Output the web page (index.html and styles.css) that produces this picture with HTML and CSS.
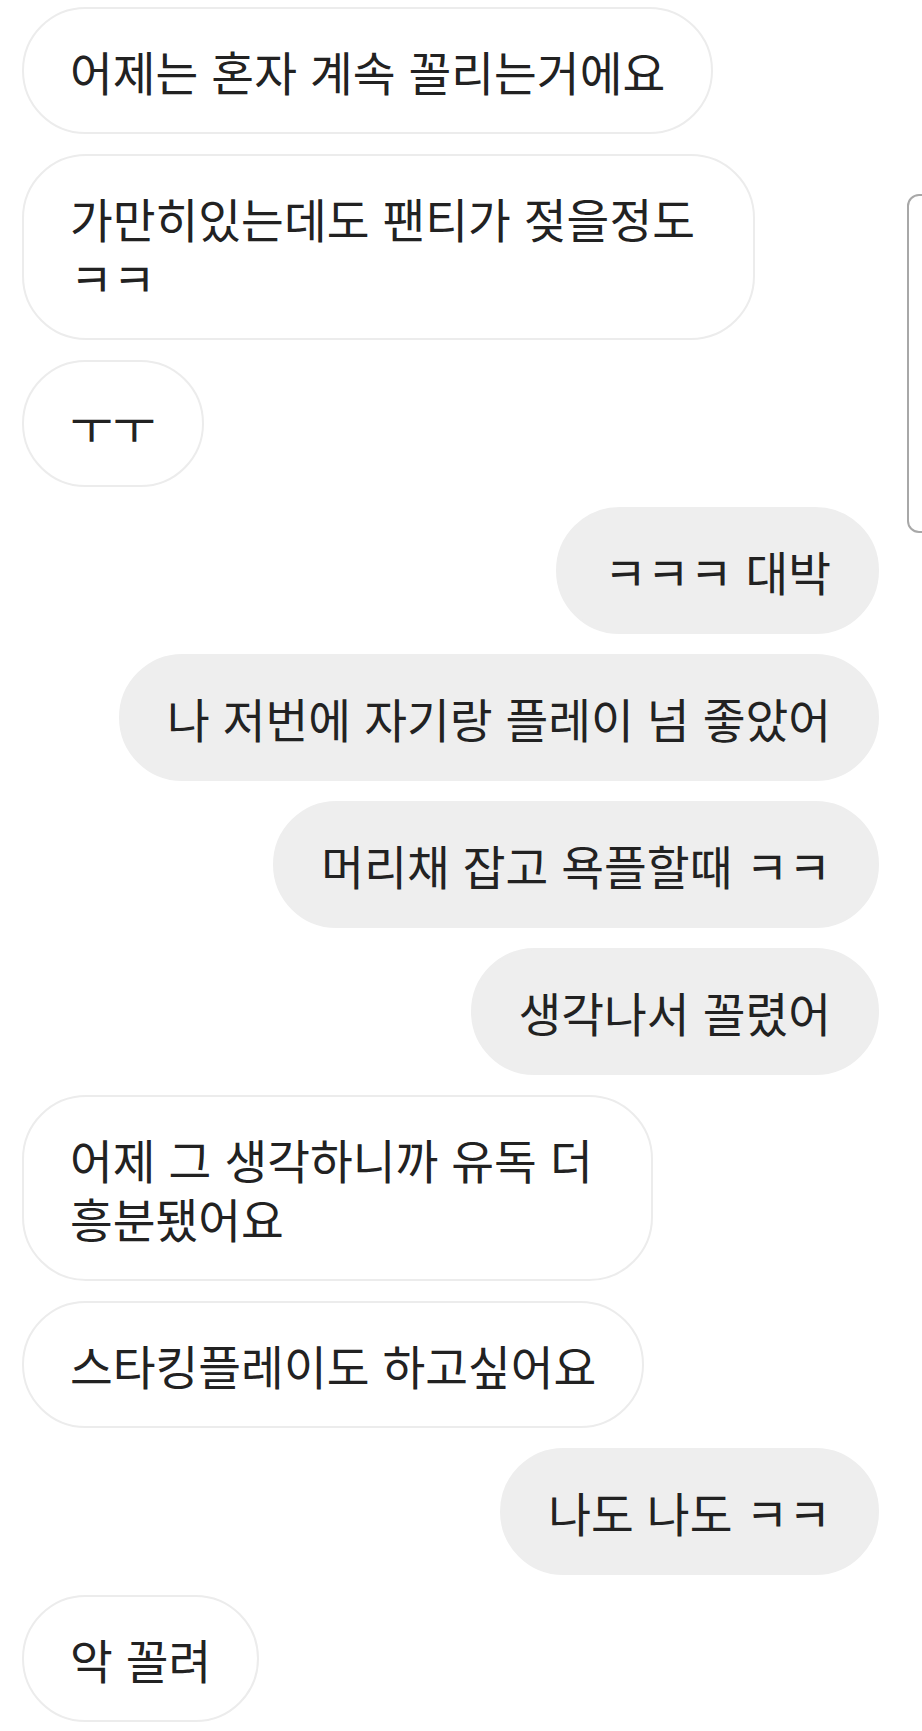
FILE: index.html
```html
<!DOCTYPE html>
<html lang="ko">

<head>
  <meta charset="UTF-8">
  <meta name="viewport" content="width=device-width, initial-scale=1.0">
  <title>채팅</title>
  <link rel="stylesheet" href="styles.css">
</head>

<body>
  <div class="chat">
    <p class="bubble them">어제는 혼자 계속 꼴리는거에요</p>
    <p class="bubble them wrapped">가만히있는데도 팬티가 젖을정도<br>ㅋㅋ</p>
    <p class="bubble them">ㅜㅜ</p>
    <p class="bubble me">ㅋㅋㅋ 대박</p>
    <p class="bubble me">나 저번에 자기랑 플레이 넘 좋았어</p>
    <p class="bubble me">머리채 잡고 욕플할때 ㅋㅋ</p>
    <p class="bubble me">생각나서 꼴렸어</p>
    <p class="bubble them wrapped">어제 그 생각하니까 유독 더<br>흥분됐어요</p>
    <p class="bubble them">스타킹플레이도 하고싶어요</p>
    <p class="bubble me">나도 나도 ㅋㅋ</p>
    <p class="bubble them">악 꼴려</p>
  </div>

  <!-- 오른쪽 스크롤 핸들 -->
  <div class="scroll-handle"></div>
</body>

</html>
```

FILE: styles.css
```css
* {
  box-sizing: border-box;
}

body {
  margin: 0;
  background: #fff;
  font-family: "Noto Sans CJK KR", "Noto Sans", sans-serif;
  color: #222;
  overflow: hidden;
}

.chat {
  display: flex;
  flex-direction: column;
  gap: 20px;
  padding: 7px 43px 0 22px;
}

.bubble {
  margin: 0;
  padding: 32px 46px;
  font-size: 46.5px;
  line-height: 59px;
  border-radius: 64px;
  border: 2px solid transparent;
  white-space: nowrap;
}

/* 줄바꿈된 말풍선은 오른쪽 여백이 조금 더 남음 */
.wrapped {
  padding-right: 58px;
}

/* 상대방 말풍선 */
.them {
  align-self: flex-start;
  background: #fff;
  border-color: #ececec;
}

/* 내 말풍선 */
.me {
  align-self: flex-end;
  background: #eeeeee;
  border-color: #eeeeee;
}

.scroll-handle {
  position: absolute;
  left: 907px;
  top: 194px;
  width: 40px;
  height: 339px;
  border: 2px solid #a8a8a8;
  border-radius: 12px;
}
```
